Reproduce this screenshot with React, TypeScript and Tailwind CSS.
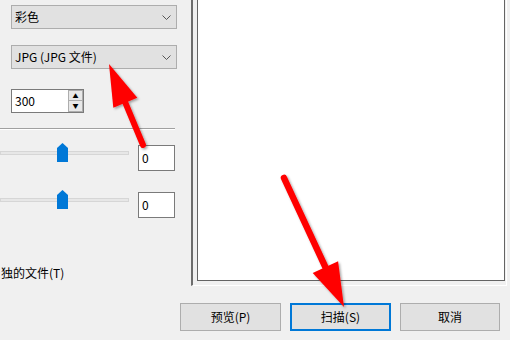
import React from 'react';

const font = { fontFamily: '"Noto Sans CJK SC", "Noto Sans", sans-serif' };

const Chevron: React.FC = () => (
  <svg width="9" height="5" viewBox="0 0 9 5" className="mr-[5px]">
    <path d="M0.5 0.5 L4.5 4.5 L8.5 0.5" fill="none" stroke="#555" strokeWidth="1" />
  </svg>
);

const Dropdown: React.FC<{ label: string }> = ({ label }) => (
  <div className="ml-[11px] flex h-[24px] w-[166px] items-center justify-between border border-[#adadad] bg-[#e1e1e1] pl-[3px] text-[12px] text-black">
    <span>{label}</span>
    <Chevron />
  </div>
);

const Thumb: React.FC = () => (
  <svg width="11" height="19" viewBox="0 0 11 19">
    <polygon points="0,5 5.5,0 11,5 11,19 0,19" fill="#0078d7" />
  </svg>
);

const SliderRow: React.FC<{ value: string }> = ({ value }) => (
  <div className="flex h-[28px] items-start">
    <div className="relative h-[19px] w-[130px]">
      <div className="mt-[8px] h-[4px] w-[129px] border border-[#d6d6d6] bg-[#e7e7e7]" />
      <div className="absolute left-[57px] top-0 flex">
        <Thumb />
      </div>
    </div>
    <div className="ml-[8px] mt-[2px] flex h-[26px] w-[37px] items-center border border-[#7a7a7a] bg-white pl-[3px] text-[12px]">
      {value}
    </div>
  </div>
);

const Arrows: React.FC = () => (
  <svg width="510" height="340" viewBox="0 0 510 340" className="pointer-events-none absolute left-0 top-0">
    <defs>
      <filter id="sh" x="-20%" y="-20%" width="140%" height="140%">
        <feDropShadow dx="1.5" dy="1.5" stdDeviation="1.2" floodColor="#000" floodOpacity="0.35" />
      </filter>
    </defs>
    <g filter="url(#sh)" fill="#ff0000">
      <line x1="125.3" y1="102.7" x2="143" y2="145" stroke="#ff0000" strokeWidth="6" strokeLinecap="round" />
      <polygon points="109,64 137.3,97.7 113.3,107.7" />
      <line x1="325.4" y1="267.1" x2="284" y2="178" stroke="#ff0000" strokeWidth="6.5" strokeLinecap="round" />
      <polygon points="344,307 338.1,261.2 312.7,273" />
    </g>
  </svg>
);

const App: React.FC = () => {
  return (
    <div className="relative h-[340px] w-[510px] overflow-hidden bg-[#f0f0f0] text-black" style={font}>
      <div className="flex h-[286px]">
        {/* left settings column */}
        <div className="flex w-[191px] flex-col pt-[5px]">
          <Dropdown label="彩色" />
          <div className="mt-[16px]">
            <Dropdown label="JPG (JPG 文件)" />
          </div>
          <div className="ml-[11px] mt-[20px] flex h-[24px] w-[73px] border border-[#7a7a7a] bg-white">
            <div className="flex flex-1 items-center pl-[3px] text-[12px]">300</div>
            <div className="flex w-[15px] flex-col">
              <div className="flex h-[11px] items-center justify-center border border-[#adadad] bg-[#e8e8e8] text-[6px] leading-none">▲</div>
              <div className="flex h-[11px] items-center justify-center border border-t-0 border-[#adadad] bg-[#e8e8e8] text-[6px] leading-none">▼</div>
            </div>
          </div>
          <div className="mt-[15px] h-[2px] w-[175px] border-t border-b border-t-[#a0a0a0] border-b-white" />
          <div className="mt-[13px]">
            <SliderRow value="0" />
          </div>
          <div className="mt-[19px]">
            <SliderRow value="0" />
          </div>
          <div className="mt-[47px] pl-[1px] text-[12px] leading-[16px]">独的文件(T)</div>
        </div>

        {/* preview frame */}
        <div className="flex w-[316px] border-b border-l-2 border-r border-b-white border-l-[#6d6d6d] border-r-white pb-[4px] pl-[4px] pr-[1px]">
          <div className="h-[281px] w-[308px] border border-t-0 border-[#646464] bg-white" />
        </div>
      </div>

      {/* bottom buttons */}
      <div className="flex gap-[9px] pl-[180px] pt-[17px] text-[12px]">
        <button className="flex h-[28px] w-[101px] items-center justify-center border border-[#adadad] bg-[#e1e1e1]">预览(P)</button>
        <button className="flex h-[28px] w-[101px] items-center justify-center border-2 border-[#0078d7] bg-[#e1e1e1]">扫描(S)</button>
        <button className="flex h-[28px] w-[100px] items-center justify-center border border-[#adadad] bg-[#e1e1e1]">取消</button>
      </div>

      <Arrows />
    </div>
  );
};

export default App;
